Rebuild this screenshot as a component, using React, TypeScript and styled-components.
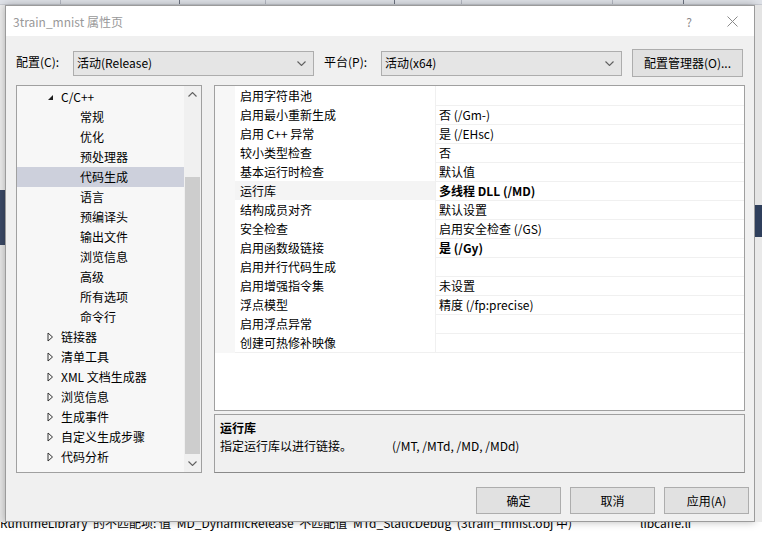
import React from "react";
import styled, { createGlobalStyle } from "styled-components";

const GlobalStyle = createGlobalStyle`
  html, body { margin: 0; padding: 0; }
  body {
    width: 762px;
    height: 533px;
    overflow: hidden;
    background: #ffffff;
    font-family: "Noto Sans CJK SC", "Microsoft YaHei", sans-serif;
    font-size: 12px;
    color: #000;
  }
`;

const Desktop = styled.div`
  width: 762px;
  height: 533px;
  display: flex;
  flex-direction: column;
  overflow: hidden;
  background: #fff;
`;

const TopStrip = styled.div`
  height: 5px;
  box-sizing: border-box;
  flex: none;
  display: flex;
  background: #dfe2e8;
  border-bottom: 1px solid #c9ccd3;
`;

const ToolSep = styled.div<{ $w: number; $dark?: boolean }>`
  width: ${(p) => p.$w}px;
  flex: none;
  border-right: 1px solid ${(p) => (p.$dark ? "#6d7380" : "#b4b8c2")};
`;

const MiddleRow = styled.div`
  height: 517px;
  flex: none;
  display: flex;
  position: relative;
  z-index: 1;
`;

const EdgeStrip = styled.div<{ $w: number }>`
  width: ${(p) => p.$w}px;
  flex: none;
  display: flex;
  flex-direction: column;
  background: #ededed;
`;

const EdgeBlock = styled.div<{ $h: number; $c: string }>`
  height: ${(p) => p.$h}px;
  flex: none;
  background: ${(p) => p.$c};
`;

const Dialog = styled.div`
  width: 750px;
  flex: none;
  box-sizing: border-box;
  border: 1px solid #9b9b9b;
  box-shadow: 0 0 8px rgba(0, 0, 0, 0.28);
  background: #f0f0f0;
  display: flex;
  flex-direction: column;
`;

const TitleBar = styled.div`
  height: 30px;
  flex: none;
  background: #ffffff;
  display: flex;
  align-items: center;
  padding-left: 7px;
`;

const Title = styled.div`
  flex: 1;
  color: #999999;
  font-size: 12px;
`;

const TitleButton = styled.div<{ $w: number }>`
  width: ${(p) => p.$w}px;
  height: 30px;
  display: flex;
  align-items: center;
  justify-content: center;
  color: #8a8a8a;
  font-size: 12px;
`;

const Body = styled.div`
  flex: 1;
  display: flex;
  flex-direction: column;
  padding: 13px 9px 0 10px;
`;

const ConfigRow = styled.div`
  height: 28px;
  display: flex;
  align-items: center;
  line-height: 16px;
`;

const FieldLabel = styled.div`
  width: 57px;
  flex: none;
  margin-top: -2px;
`;

const Combo = styled.div`
  width: 241px;
  height: 25px;
  box-sizing: border-box;
  flex: none;
  margin-right: 10px;
  border: 1px solid #adadad;
  background: #e5e5e5;
  display: flex;
  align-items: center;
  padding: 0 7px 0 3px;
  span {
    flex: 1;
    margin-top: -1px;
  }
`;

const PushButton = styled.div<{ $w: number; $h: number }>`
  width: ${(p) => p.$w}px;
  height: ${(p) => p.$h}px;
  box-sizing: border-box;
  flex: none;
  border: 1px solid #adadad;
  background: #e1e1e1;
  display: flex;
  align-items: center;
  justify-content: center;
`;

const Main = styled.div`
  margin-top: 8px;
  height: 388px;
  display: flex;
  gap: 12px;
`;

const TreePanel = styled.div`
  width: 186px;
  flex: none;
  box-sizing: border-box;
  border: 1px solid #a0a0a0;
  background: #f7f7f7;
  display: flex;
`;

const TreeList = styled.div`
  flex: 1;
  overflow: hidden;
`;

const TreeRow = styled.div<{ $indent: number; $selected?: boolean }>`
  height: 20px;
  line-height: 20px;
  display: flex;
  align-items: center;
  padding-left: ${(p) => p.$indent}px;
  background: ${(p) => (p.$selected ? "#cdd0dc" : "transparent")};
  white-space: nowrap;
  &:first-child {
    margin-top: 1px;
  }
`;

const Arrow = styled.span`
  width: 14px;
  flex: none;
  display: flex;
  align-items: center;
`;

const ScrollBar = styled.div`
  width: 17px;
  flex: none;
  display: flex;
  flex-direction: column;
  background: #f0f0f0;
`;

const ScrollArrow = styled.div`
  height: 17px;
  flex: none;
  display: flex;
  align-items: center;
  justify-content: center;
`;

const ScrollTrack = styled.div`
  flex: 1;
  padding: 74px 1px 0 1px;
`;

const Thumb = styled.div`
  height: 277px;
  background: #cdcdcd;
`;

const RightColumn = styled.div`
  width: 531px;
  flex: none;
  display: flex;
  flex-direction: column;
  gap: 3px;
`;

const Grid = styled.div`
  height: 326px;
  flex: none;
  box-sizing: border-box;
  border: 1px solid #a0a0a0;
  background: #ffffff;
  overflow: hidden;
`;

const GridRow = styled.div<{ $selected?: boolean }>`
  height: 19px;
  display: grid;
  grid-template-columns: 20px 200px 1fr;
  line-height: 19px;
  & > div:nth-child(2) {
    background: ${(p) => (p.$selected ? "#f4f4f4" : "#fff")};
  }
`;

const Gutter = styled.div`
  background: #f7f7f7;
`;

const NameCell = styled.div`
  padding-left: 5px;
  border-bottom: 1px solid #f0f0f0;
  white-space: nowrap;
`;

const ValueCell = styled.div<{ $bold?: boolean }>`
  padding-left: 3px;
  border-bottom: 1px solid #f0f0f0;
  border-left: 1px solid #f0f0f0;
  font-weight: ${(p) => (p.$bold ? 700 : 400)};
  white-space: nowrap;
`;

const Description = styled.div`
  flex: 1;
  box-sizing: border-box;
  border: 1px solid #a0a0a0;
  border-bottom-color: #8a8a8a;
  background: #f0f0f0;
  padding: 4px 6px 0 5px;
  line-height: 18px;
`;

const DescTitle = styled.div`
  font-weight: 700;
`;

const DescText = styled.span`
  display: inline-block;
  width: 172px;
`;

const ButtonRow = styled.div`
  margin-top: 14px;
  margin-right: -4px;
  display: flex;
  justify-content: flex-end;
  gap: 9px;
`;

const StatusLine = styled.div`
  height: 16px;
  flex: none;
  margin-top: -7px;
  display: flex;
  white-space: nowrap;
  line-height: 16px;
  font-size: 12px;
  background: #fff;
`;

const StatusText = styled.span<{ $w: number }>`
  width: ${(p) => p.$w}px;
  flex: none;
`;

const Chevron = ({ up }: { up?: boolean }) => (
  <svg width="9" height="5" viewBox="0 0 9 5">
    <polyline
      points={up ? "0.5,4.5 4.5,0.5 8.5,4.5" : "0.5,0.5 4.5,4.5 8.5,0.5"}
      fill="none"
      stroke="#606060"
      strokeWidth="1.1"
    />
  </svg>
);

const Expanded = () => (
  <svg width="7" height="7" viewBox="0 0 7 7">
    <polygon points="6,1 6,6 1,6" fill="#1e1e1e" />
  </svg>
);

const Collapsed = () => (
  <svg width="7" height="10" viewBox="0 0 7 10">
    <polygon points="1,1 5.5,5 1,9" fill="none" stroke="#333" strokeWidth="1" />
  </svg>
);

const CloseIcon = () => (
  <svg width="11" height="11" viewBox="0 0 11 11">
    <path d="M0.5 0.5 L10.5 10.5 M10.5 0.5 L0.5 10.5" stroke="#8a8a8a" strokeWidth="1" />
  </svg>
);

type TreeItem = { label: string; kind?: "open" | "closed"; selected?: boolean };

const treeItems: TreeItem[] = [
  { label: "C/C++", kind: "open" },
  { label: "常规" },
  { label: "优化" },
  { label: "预处理器" },
  { label: "代码生成", selected: true },
  { label: "语言" },
  { label: "预编译头" },
  { label: "输出文件" },
  { label: "浏览信息" },
  { label: "高级" },
  { label: "所有选项" },
  { label: "命令行" },
  { label: "链接器", kind: "closed" },
  { label: "清单工具", kind: "closed" },
  { label: "XML 文档生成器", kind: "closed" },
  { label: "浏览信息", kind: "closed" },
  { label: "生成事件", kind: "closed" },
  { label: "自定义生成步骤", kind: "closed" },
  { label: "代码分析", kind: "closed" },
];

const props: { name: string; value: string; bold?: boolean; selected?: boolean }[] = [
  { name: "启用字符串池", value: "" },
  { name: "启用最小重新生成", value: "否 (/Gm-)" },
  { name: "启用 C++ 异常", value: "是 (/EHsc)" },
  { name: "较小类型检查", value: "否" },
  { name: "基本运行时检查", value: "默认值" },
  { name: "运行库", value: "多线程 DLL (/MD)", bold: true, selected: true },
  { name: "结构成员对齐", value: "默认设置" },
  { name: "安全检查", value: "启用安全检查 (/GS)" },
  { name: "启用函数级链接", value: "是 (/Gy)", bold: true },
  { name: "启用并行代码生成", value: "" },
  { name: "启用增强指令集", value: "未设置" },
  { name: "浮点模型", value: "精度 (/fp:precise)" },
  { name: "启用浮点异常", value: "" },
  { name: "创建可热修补映像", value: "" },
];

export default function App() {
  return (
    <Desktop>
      <GlobalStyle />
      <TopStrip>
        <ToolSep $w={60} />
        <ToolSep $w={118} $dark />
        <ToolSep $w={85} />
        <ToolSep $w={128} $dark />
        <ToolSep $w={66} />
        <ToolSep $w={150} />
        <ToolSep $w={70} $dark />
      </TopStrip>
      <MiddleRow>
        <EdgeStrip $w={5}>
          <EdgeBlock $h={185} $c="#ececec" />
          <EdgeBlock $h={55} $c="#3c4a66" />
          <EdgeBlock $h={277} $c="#e6e6e6" />
        </EdgeStrip>
        <Dialog>
          <TitleBar>
            <Title>3train_mnist 属性页</Title>
            <TitleButton $w={42}>?</TitleButton>
            <TitleButton $w={44}>
              <CloseIcon />
            </TitleButton>
          </TitleBar>
          <Body>
            <ConfigRow>
              <FieldLabel>配置(C):</FieldLabel>
              <Combo>
                <span>活动(Release)</span>
                <Chevron />
              </Combo>
              <FieldLabel>平台(P):</FieldLabel>
              <Combo>
                <span>活动(x64)</span>
                <Chevron />
              </Combo>
              <PushButton $w={111} $h={28}>配置管理器(O)...</PushButton>
            </ConfigRow>
            <Main>
              <TreePanel>
                <TreeList>
                  {treeItems.map((item, i) => (
                    <TreeRow key={i} $indent={item.kind ? 30 : 63} $selected={item.selected}>
                      {item.kind && (
                        <Arrow>{item.kind === "open" ? <Expanded /> : <Collapsed />}</Arrow>
                      )}
                      {item.label}
                    </TreeRow>
                  ))}
                </TreeList>
                <ScrollBar>
                  <ScrollArrow>
                    <Chevron up />
                  </ScrollArrow>
                  <ScrollTrack>
                    <Thumb />
                  </ScrollTrack>
                  <ScrollArrow>
                    <Chevron />
                  </ScrollArrow>
                </ScrollBar>
              </TreePanel>
              <RightColumn>
                <Grid>
                  {props.map((p, i) => (
                    <GridRow key={i} $selected={p.selected}>
                      <Gutter />
                      <NameCell>{p.name}</NameCell>
                      <ValueCell $bold={p.bold}>{p.value}</ValueCell>
                    </GridRow>
                  ))}
                </Grid>
                <Description>
                  <DescTitle>运行库</DescTitle>
                  <div>
                    <DescText>指定运行库以进行链接。</DescText>
                    (/MT, /MTd, /MD, /MDd)
                  </div>
                </Description>
              </RightColumn>
            </Main>
            <ButtonRow>
              <PushButton $w={85} $h={27}>确定</PushButton>
              <PushButton $w={85} $h={27}>取消</PushButton>
              <PushButton $w={85} $h={27}>应用(A)</PushButton>
            </ButtonRow>
          </Body>
        </Dialog>
        <EdgeStrip $w={7}>
          <EdgeBlock $h={200} $c="#e4e4e4" />
          <EdgeBlock $h={32} $c="#2f3f5c" />
          <EdgeBlock $h={285} $c="#e9e9e9" />
        </EdgeStrip>
      </MiddleRow>
      <StatusLine>
        <StatusText $w={640}>RuntimeLibrary"的不匹配项: 值"MD_DynamicRelease"不匹配值"MTd_StaticDebug"(3train_mnist.obj 中)</StatusText>
        <span>libcaffe.li</span>
      </StatusLine>
    </Desktop>
  );
}
